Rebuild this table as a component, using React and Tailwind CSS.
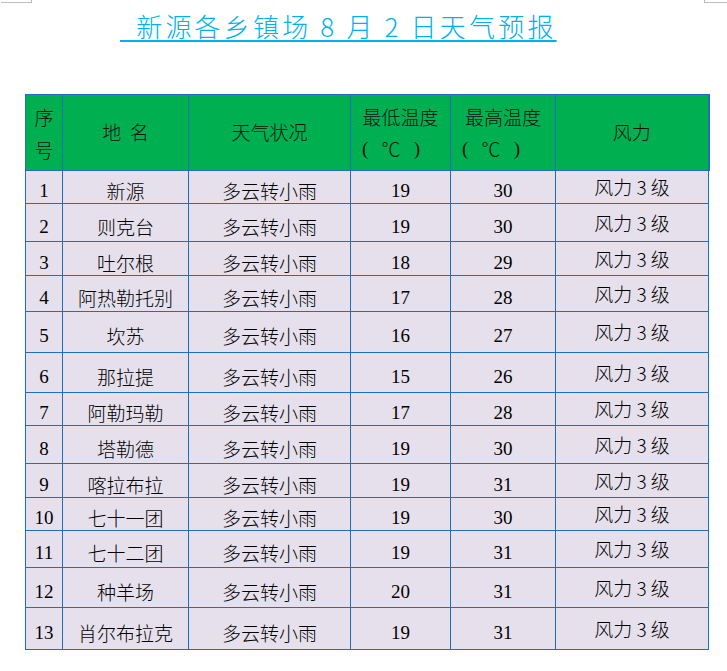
import React from "react";

const rows = [
  ["1", "新源", "19", "30", "h-[33px]"],
  ["2", "则克台", "19", "30", "h-[38px]"],
  ["3", "吐尔根", "18", "29", "h-[34px]"],
  ["4", "阿热勒托别", "17", "28", "h-[36px]"],
  ["5", "坎苏", "16", "27", "h-[41px]"],
  ["6", "那拉提", "15", "26", "h-[40px]"],
  ["7", "阿勒玛勒", "17", "28", "h-[33px]"],
  ["8", "塔勒德", "19", "30", "h-[38px]"],
  ["9", "喀拉布拉", "19", "31", "h-[34px]"],
  ["10", "七十一团", "19", "30", "h-[33px]"],
  ["11", "七十二团", "19", "31", "h-[37px]"],
  ["12", "种羊场", "20", "31", "h-[40px]"],
  ["13", "肖尔布拉克", "19", "31", "h-[42px]"],
];

const cjk = "font-['Noto_Sans_CJK_SC',sans-serif]";
const serif = "font-['Liberation_Serif','Noto_Sans_CJK_SC',serif]";

function Unit() {
  return (
    <span className="flex w-[99px] pl-[11px]">
      <span className="flex w-[58px] justify-between">
        <span className="font-['Liberation_Serif',serif] font-normal">(</span>
        <span>℃</span>
        <span className="font-['Liberation_Serif',serif] font-normal">)</span>
      </span>
    </span>
  );
}

export default function App() {
  return (
    <div className="relative w-[727px] h-[671px] bg-white overflow-hidden">
      <div className="flex justify-between">
        <div className="w-[31px] h-[3px] border-b border-r border-[#bdbdbd] ml-[1px]" />
        <div className="w-[23px] h-[3px] border-b border-l border-[#bdbdbd]" />
      </div>
      <div className="pl-[120px] pt-[6px] h-[91px]">
        <span
          className={`${cjk} text-[26px] leading-[33px] tracking-[3.2px] text-[#00b0f0] font-light underline decoration-[1.5px] underline-offset-[3px] whitespace-pre`}
        >
          {"\u2002新源各乡镇场 8 月 2 日天气预报"}
        </span>
      </div>
      <table className="ml-[25px] border-collapse table-fixed text-black text-[19px]">
        <colgroup>
          <col className="w-[37px]" />
          <col className="w-[126px]" />
          <col className="w-[162px]" />
          <col className="w-[99px]" />
          <col className="w-[105px]" />
          <col className="w-[153px]" />
        </colgroup>
        <thead>
          <tr className={`h-[76px] bg-[#00b050] ${cjk} font-light text-[#111]`}>
            <th className="border border-[#1e6fbe] font-light leading-[33px]">
              序<br />号
            </th>
            <th className="border border-[#1e6fbe] font-light">地&nbsp;&nbsp;名</th>
            <th className="border border-[#1e6fbe] font-light">天气状况</th>
            <th className="border border-[#1e6fbe] font-light leading-[32px]">
              最低温度
              <Unit />
            </th>
            <th className="border border-[#1e6fbe] font-light leading-[32px]">
              最高温度
              <Unit />
            </th>
            <th className="border border-[#1e6fbe] border-r-2 font-light">风力</th>
          </tr>
        </thead>
        <tbody>
          {rows.map(([n, place, lo, hi, h]) => (
            <tr key={n} className={`${h} bg-[#e6e0ec]`}>
              <td className={`border border-[#1e6fbe] text-center ${serif} pt-[8px] leading-[20px]`}>{n}</td>
              <td className={`border border-[#1e6fbe] text-center ${cjk} font-light pt-[8px] leading-[20px]`}>{place}</td>
              <td className={`border border-[#1e6fbe] text-center ${cjk} font-light pt-[8px] leading-[20px]`}>多云转小雨</td>
              <td className={`border border-[#1e6fbe] text-center ${serif} pt-[8px] leading-[20px]`}>{lo}</td>
              <td className={`border border-[#1e6fbe] text-center ${serif} pt-[8px] leading-[20px]`}>{hi}</td>
              <td className={`border border-[#1e6fbe] text-center ${cjk} font-light leading-[20px] whitespace-pre`}>{"风力 3 级"}</td>
            </tr>
          ))}
        </tbody>
      </table>
    </div>
  );
}
